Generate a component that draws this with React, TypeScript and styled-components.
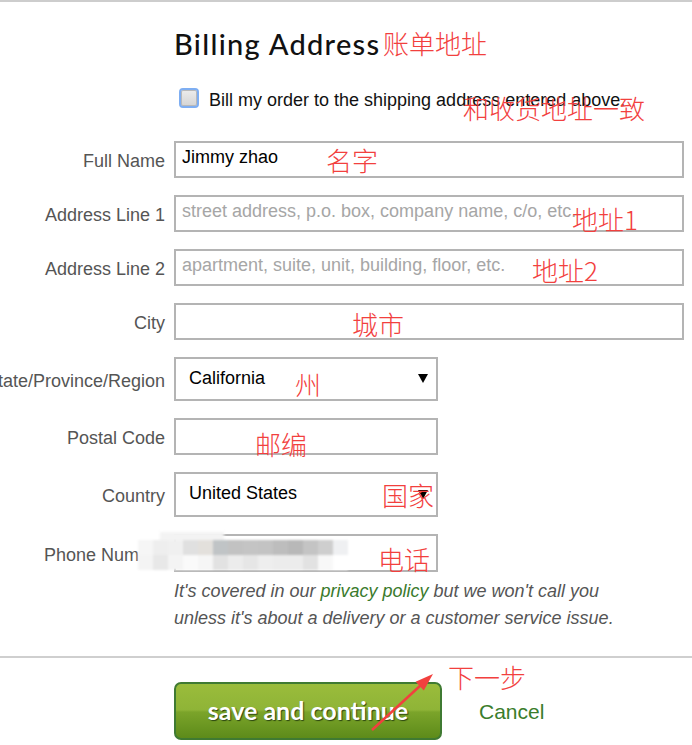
import React from 'react'
import styled, { createGlobalStyle } from 'styled-components'

const GlobalStyle = createGlobalStyle`
    html, body {
        margin: 0;
        padding: 0;
        background: #fff;
    }
    body {
        font-family: "Liberation Sans", Arial, sans-serif;
        overflow: hidden;
    }
`

const Page = styled.div`
    position: relative;
    width: 692px;
    height: 745px;
    border-top: 2px solid #cdcdcd;
    box-sizing: border-box;
    overflow: hidden;
`

const Header = styled.div`
    position: relative;
    padding: 27px 0 0 174px;
    height: 56px;
    box-sizing: border-box;
`

const Title = styled.h2`
    margin: 0;
    font-family: Lato, "Open Sans", sans-serif;
    font-weight: 500;
    font-size: 29px;
    line-height: 30px;
    color: #111;
    letter-spacing: 1.3px;
`

const Note = styled.span<{ $left: number; $top: number }>`
    position: absolute;
    left: ${(p) => p.$left}px;
    top: ${(p) => p.$top}px;
    font-family: "Noto Sans CJK SC", sans-serif;
    font-weight: 300;
    font-size: 26px;
    line-height: 26px;
    color: #f2403e;
    white-space: nowrap;
    pointer-events: none;
`

const SameRow = styled.label`
    position: relative;
    display: flex;
    align-items: flex-start;
    gap: 10px;
    margin: 30px 0 0 179px;
    height: 20px;
`

const SameText = styled.span`
    margin-top: 2px;
    font-size: 18px;
    line-height: 20px;
    color: #111;
    white-space: nowrap;
`

const CheckBox = styled.span`
    flex: none;
    width: 20px;
    height: 20px;
    box-sizing: border-box;
    border: 2px solid #7eaef2;
    border-radius: 4px;
    background: linear-gradient(#ececec, #d4d4d4);
    box-shadow: inset 0 0 0 1px #b9b9b9;
`

const Form = styled.div`
    display: grid;
    grid-template-columns: 165px 1fr;
    column-gap: 9px;
    row-gap: 17px;
    margin-top: 33px;
    padding-right: 8px;
`

const Label = styled.div`
    display: flex;
    align-items: center;
    justify-content: flex-end;
    padding-top: 4px;
    white-space: nowrap;
    font-size: 18px;
    color: #555;
`

const Field = styled.div<{ $short?: boolean }>`
    position: relative;
    width: ${(p) => (p.$short ? '264px' : '100%')};
`

const TextInput = styled.input<{ $h?: number }>`
    display: block;
    width: 100%;
    height: ${(p) => p.$h ?? 37}px;
    box-sizing: border-box;
    border: 2px solid #b4b4b4;
    padding: 0 6px 4px;
    font-family: "Liberation Sans", Arial, sans-serif;
    font-size: 18px;
    color: #000;
    outline: none;
    background: #fff;
    &::placeholder {
        color: #a6a6a6;
    }
`

const Select = styled.select<{ $h: number }>`
    display: block;
    width: 100%;
    height: ${(p) => p.$h}px;
    box-sizing: border-box;
    border: 2px solid #b4b4b4;
    border-radius: 0;
    padding: 0 13px 3px;
    appearance: none;
    background: #fff;
    font-family: "Liberation Sans", Arial, sans-serif;
    font-size: 18px;
    color: #000;
    outline: none;
`

const Caret = styled.svg`
    position: absolute;
    right: 10px;
    top: 50%;
    margin-top: -5px;
    width: 10px;
    height: 9px;
    pointer-events: none;
`

const Mosaic = styled.div`
    position: absolute;
    left: -36px;
    top: 6px;
    display: grid;
    grid-template-columns: repeat(14, 15px);
    grid-auto-rows: 15px;
    filter: blur(1px);
    pointer-events: none;
`

const Smear = styled.div`
    position: absolute;
    left: -14px;
    top: -2px;
    width: 64px;
    height: 10px;
    background: #f3f3f3;
    filter: blur(1.5px);
    pointer-events: none;
`

const Tile = styled.div<{ $c: string }>`
    background: ${(p) => p.$c};
`

const Help = styled.p`
    grid-column: 2;
    max-width: 450px;
    margin: -11px 0 0;
    font-size: 18px;
    font-style: italic;
    line-height: 27px;
    color: #555;
`

const Link = styled.a`
    color: #3a7a2c;
    text-decoration: none;
`

const Divider = styled.hr`
    margin: 24px 0 0;
    border: 0;
    border-top: 2px solid #cfcfcf;
`

const Actions = styled.div`
    position: relative;
    display: flex;
    align-items: center;
    gap: 37px;
    padding: 24px 0 0 174px;
`

const SaveButton = styled.button`
    width: 268px;
    height: 58px;
    border: 2px solid #3f7a32;
    border-radius: 7px;
    background: linear-gradient(#9abc3b 0%, #8fb437 48%, #7ba42a 52%, #5d8b1a 100%);
    font-family: Lato, "Open Sans", sans-serif;
    font-weight: 700;
    font-size: 25px;
    color: #fff;
    text-shadow: 1px 1px 1px #2b4510;
    padding: 0 0 3px;
    cursor: pointer;
`

const CancelLink = styled.a`
    font-family: "Liberation Sans", Arial, sans-serif;
    font-size: 21px;
    color: #3a7d2c;
    text-decoration: none;
    padding-top: 2px;
`

const Arrow = styled.svg`
    position: absolute;
    left: 360px;
    top: 14px;
    width: 80px;
    height: 62px;
    pointer-events: none;
`

const mosaic = [
    ['#f6f6f6', '#eeeeee', '#f0f0f0', '#e0e0e0', '#e3e0dc', '#c0c4c6', '#c2c2c2', '#c4c4c4', '#c3c3c3', '#bdbdbd', '#b8b8b8', '#c4c4c4', '#cecece', '#eff0f2'],
    ['#f4f4f4', '#e8e8e8', '#f4f4f4', '#fafafa', '#f6f6f6', '#e2e2e2', '#ececec', '#e6e6e6', '#eeeeee', '#ececec', '#ececec', '#e2e2e2', '#f8f8f8', '#ffffff'],
]

type Row = {
    label: string
    kind: 'text' | 'select'
    value?: string
    placeholder?: string
    short?: boolean
    h?: number
    note?: { text: string; left: number; top: number }
    hidden?: boolean
}

const rows: Row[] = [
    { label: 'Full Name', kind: 'text', value: 'Jimmy zhao', note: { text: '名字', left: 152, top: 6 } },
    {
        label: 'Address Line 1',
        kind: 'text',
        placeholder: 'street address, p.o. box, company name, c/o, etc.',
        note: { text: '地址1', left: 398, top: 11 },
    },
    {
        label: 'Address Line 2',
        kind: 'text',
        placeholder: 'apartment, suite, unit, building, floor, etc.',
        note: { text: '地址2', left: 358, top: 8 },
    },
    { label: 'City', kind: 'text', note: { text: '城市', left: 178, top: 8 } },
    {
        label: 'State/Province/Region',
        kind: 'select',
        value: 'California',
        short: true,
        h: 44,
        note: { text: '州', left: 121, top: 14 },
    },
    { label: 'Postal Code', kind: 'text', short: true, h: 37, note: { text: '邮编', left: 81, top: 13 } },
    {
        label: 'Country',
        kind: 'select',
        value: 'United States',
        short: true,
        h: 45,
        note: { text: '国家', left: 208, top: 10 },
    },
    { label: 'Phone Number', kind: 'text', short: true, h: 38, hidden: true, note: { text: '电话', left: 204, top: 12 } },
]

const BillingAddress: React.FC = () => {
    return (
        <Page>
            <Header>
                <Title>Billing Address</Title>
                <Note $left={383} $top={28}>
                    账单地址
                </Note>
            </Header>

            <SameRow>
                <CheckBox />
                <SameText>Bill my order to the shipping address entered above.</SameText>
                <Note $left={284} $top={7}>
                    和收货地址一致
                </Note>
            </SameRow>

            <Form>
                {rows.map((r) => (
                    <React.Fragment key={r.label}>
                        <Label>{r.label}</Label>
                        <Field $short={r.short}>
                            {r.kind === 'text' ? (
                                <TextInput
                                    $h={r.h}
                                    defaultValue={r.value}
                                    placeholder={r.placeholder}
                                />
                            ) : (
                                <>
                                    <Select $h={r.h ?? 44} defaultValue={r.value}>
                                        <option>{r.value}</option>
                                    </Select>
                                    <Caret viewBox="0 0 10 9">
                                        <path d="M0 0 H10 L5 9 Z" fill="#000" />
                                    </Caret>
                                </>
                            )}
                            {r.note && (
                                <Note $left={r.note.left} $top={r.note.top}>
                                    {r.note.text}
                                </Note>
                            )}
                            {r.hidden && (
                                <>
                                    <Smear />
                                    <Mosaic>
                                        {mosaic.flat().map((c, i) => (
                                            <Tile key={i} $c={c} />
                                        ))}
                                    </Mosaic>
                                </>
                            )}
                        </Field>
                    </React.Fragment>
                ))}
                <Help>
                    It's covered in our <Link href="#">privacy policy</Link> but we won't call you
                    unless it's about a delivery or a customer service issue.
                </Help>
            </Form>

            <Divider />

            <Actions>
                <SaveButton>save and continue</SaveButton>
                <CancelLink href="#">Cancel</CancelLink>
                <Note $left={448} $top={6}>
                    下一步
                </Note>
                <Arrow viewBox="0 0 80 62">
                    <line x1="12" y1="58" x2="61" y2="13" stroke="#f2403e" strokeWidth="2.5" />
                    <path d="M73 2 L63.8 18.6 L55.6 9.8 Z" fill="#f2403e" />
                </Arrow>
            </Actions>
        </Page>
    )
}

export default function App() {
    return (
        <>
            <GlobalStyle />
            <BillingAddress />
        </>
    )
}
